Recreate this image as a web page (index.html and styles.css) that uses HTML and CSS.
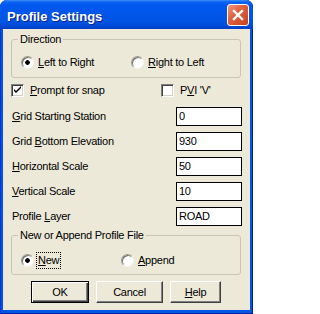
FILE: index.html
```html
<!DOCTYPE html>
<html>
<head>
<meta charset="utf-8">
<title>Profile Settings</title>
<link rel="stylesheet" href="styles.css">
</head>
<body>
<div class="window">
  <div class="titlebar">
    <span class="title">Profile Settings</span>
    <span class="close"><svg width="20" height="20" viewBox="0 0 20 20"><path d="M6 6 L14 14 M14 6 L6 14" stroke="#fff" stroke-width="2.4" stroke-linecap="square"/></svg></span>
  </div>
  <div class="client">
    <div class="group g1">
      <div class="legend">Direction</div>
      <div class="optrow">
        <label class="opt w110"><span class="radio on"></span><span><u>L</u>eft to Right</span></label>
        <label class="opt"><span class="radio"></span><span><u>R</u>ight to Left</span></label>
      </div>
    </div>
    <div class="checkrow">
      <label class="chk w150"><span class="box"><svg width="11" height="11" viewBox="0 0 11 11"><path d="M2 4 L2 6 L4 8 L9 3 L9 1 L4 6 Z" fill="#000"/></svg></span><span><u>P</u>rompt for snap</span></label>
      <label class="chk"><span class="box"></span><span>P<u>V</u>I 'V'</span></label>
    </div>
    <div class="fields">
      <div class="field"><span class="lbl"><u>G</u>rid Starting Station</span><span class="edit">0</span></div>
      <div class="field"><span class="lbl">Grid <u>B</u>ottom Elevation</span><span class="edit">930</span></div>
      <div class="field"><span class="lbl"><u>H</u>orizontal Scale</span><span class="edit">50</span></div>
      <div class="field"><span class="lbl"><u>V</u>ertical Scale</span><span class="edit">10</span></div>
      <div class="field"><span class="lbl">Profile <u>L</u>ayer</span><span class="edit">ROAD</span></div>
    </div>
    <div class="group g2">
      <div class="legend">New or Append Profile File</div>
      <div class="optrow">
        <label class="opt w100"><span class="radio on"></span><span class="focus"><u>N</u>ew</span></label>
        <label class="opt"><span class="radio"></span><span><u>A</u>ppend</span></label>
      </div>
    </div>
    <div class="buttons">
      <span class="btn default w58">OK</span>
      <span class="btn w67">Cancel</span>
      <span class="btn w51"><u>H</u>elp</span>
    </div>
  </div>
</div>
</body>
</html>
```

FILE: styles.css
```css
html, body {
  margin: 0;
  padding: 0;
  background: #ffffff;
}
body {
  font-family: "Liberation Sans", Arial, sans-serif;
  font-size: 11px;
  letter-spacing: -0.25px;
  color: #000;
  width: 253px;
  height: 314px;
  overflow: hidden;
}
.window {
  width: 253px;
  height: 314px;
  box-sizing: border-box;
  background: #0055E5;
  border-radius: 7px 7px 0 0;
  display: flex;
  flex-direction: column;
  overflow: hidden;
  box-shadow: inset 1px 0 #0831D9, inset -1px 0 #001EA0, inset 0 -1px #001EA0;
}
.titlebar {
  height: 29px;
  flex: none;
  display: flex;
  justify-content: space-between;
  align-items: flex-start;
  background: linear-gradient(to bottom, #3D8FF8 0px, #0A64F2 2px, #0058EE 5px, #0056E8 14px, #0054E3 22px, #0049D4 26px, #003FC4 29px);
  border-radius: 7px 7px 0 0;
}
.title {
  margin: 10px 0 0 7px;
  line-height: 13px;
  font-size: 13px;
  font-weight: bold;
  letter-spacing: 0;
  color: #fff;
  text-shadow: 1px 1px 0 #0A1E8A;
}
.close {
  margin: 4px 4px 0 0;
  width: 22px;
  height: 22px;
  box-sizing: border-box;
  border: 1px solid #fff;
  border-radius: 3px;
  background: linear-gradient(135deg, #F29A7E 0%, #E0613F 40%, #C9401E 100%);
  display: flex;
  align-items: center;
  justify-content: center;
}
.close svg { display: block; }
.client {
  margin: 0 3px;
  height: 281px;
  flex: none;
  background: #ECE9D8;
  display: flex;
  flex-direction: column;
  align-items: flex-start;
}
.group {
  box-sizing: border-box;
  width: 230px;
  margin-left: 8px;
  border: 1px solid #C8C5B4;
  border-radius: 3px;
}
.legend {
  width: fit-content;
  margin: -7px 0 0 6px;
  padding: 0 2px;
  background: #ECE9D8;
  line-height: 13px;
}
.g1 {
  margin-top: 10px;
  padding-bottom: 8px;
}
.g1 .optrow { margin-top: 10px; }
.g2 {
  margin-top: 9px;
  padding-bottom: 7px;
}
.g2 .optrow { margin-top: 12px; }
.optrow {
  display: flex;
  align-items: center;
  height: 13px;
  padding-left: 9px;
}
.opt {
  display: flex;
  align-items: center;
  gap: 4px;
  line-height: 13px;
}
.w110 { width: 110px; }
.w100 { width: 100px; }
.w150 { width: 150px; }
.radio {
  width: 13px;
  height: 13px;
  flex: none;
  box-sizing: border-box;
  border-radius: 50%;
  background: #fff;
  border: 1px solid;
  border-color: #9C9A8F #F4F3EE #F4F3EE #9C9A8F;
  box-shadow: inset 1px 1px 0 #6F6D66;
}
.radio.on {
  background: radial-gradient(circle at 50% 50%, #000 0, #000 2px, #fff 2.6px);
}
.focus {
  outline: 1px dotted #000;
  outline-offset: 1px;
}
.checkrow {
  margin: 6px 0 0 8px;
  display: flex;
  height: 13px;
}
.chk {
  display: flex;
  align-items: center;
  gap: 6px;
  line-height: 13px;
}
.box {
  width: 13px;
  height: 13px;
  flex: none;
  box-sizing: border-box;
  background: #fff;
  border: 1px solid;
  border-color: #808080 #fff #fff #808080;
  box-shadow: inset 1px 1px 0 #404040, inset -1px -1px 0 #D4D0C8;
  display: flex;
  align-items: center;
  justify-content: center;
}
.box svg { display: block; }
.fields {
  margin: 10px 0 0 9px;
  display: flex;
  flex-direction: column;
  gap: 6px;
}
.field {
  display: flex;
  align-items: center;
}
.lbl {
  width: 164px;
  line-height: 13px;
}
.edit {
  width: 66px;
  height: 19px;
  box-sizing: border-box;
  border: 1px solid #000;
  background: #fff;
  padding-left: 2px;
  line-height: 17px;
}
.buttons {
  margin: 6px 0 0 28px;
  display: flex;
  gap: 7px;
}
.btn {
  height: 22px;
  box-sizing: border-box;
  background: #ECE9D8;
  border: 1px solid;
  border-color: #fff #404040 #404040 #fff;
  box-shadow: inset -1px -1px 0 #808080;
  display: flex;
  align-items: center;
  justify-content: center;
  line-height: 13px;
}
.btn.default {
  border: 1px solid #000;
  box-shadow: inset 1px 1px 0 #fff, inset -1px -1px 0 #404040, inset -2px -2px 0 #808080;
}
.w58 { width: 58px; }
.w67 { width: 67px; }
.w51 { width: 51px; }
```
